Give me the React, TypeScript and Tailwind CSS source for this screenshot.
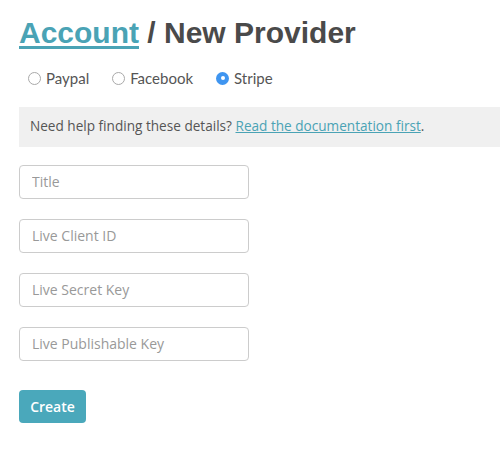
import React from "react";

const PROVIDERS = ["Paypal", "Facebook", "Stripe"];
const FIELDS = ["Title", "Live Client ID", "Live Secret Key", "Live Publishable Key"];

function Radio({ label, checked }: { label: string; checked?: boolean }) {
  return (
    <label className="flex items-center gap-[5px]">
      {checked ? (
        <span className="flex h-[13px] w-[13px] items-center justify-center rounded-full bg-[#3f95f0]">
          <span className="h-[4px] w-[4px] rounded-full bg-white" />
        </span>
      ) : (
        <span className="h-[13px] w-[13px] rounded-full border border-[#a9a9a9] bg-white" />
      )}
      <span>{label}</span>
    </label>
  );
}

export default function App() {
  return (
    <div className="h-[460px] w-[500px] overflow-hidden bg-white pl-[19px] pt-[14px] font-['Open_Sans',sans-serif] text-[14px] text-[#555]">
      <h1 className="font-['Liberation_Sans',Arial,sans-serif] text-[30px] font-bold leading-[37px] text-[#4a4a4a]">
        <a href="#" className="text-[#4aa3b5] underline decoration-[3px] underline-offset-[3px]">
          Account
        </a>{" "}
        / New Provider
      </h1>

      <div className="mt-[16px] flex gap-[23px] pl-[9px] font-['Lato',sans-serif] text-[15px] text-[#555]">
        {PROVIDERS.map((p) => (
          <Radio key={p} label={p} checked={p === "Stripe"} />
        ))}
      </div>

      <div className="mt-[17px] flex h-[40px] items-center bg-[#f0f0f0] pl-[11px] text-[13.6px]">
        Need help finding these details?&nbsp;
        <a href="#" className="text-[#4aa3b5] underline">
          Read the documentation first
        </a>
        .
      </div>

      <form className="mt-[18px] flex flex-col gap-[20px]">
        {FIELDS.map((f) => (
          <input
            key={f}
            placeholder={f}
            className="h-[34px] w-[230px] rounded-[4px] border border-[#ccc] px-[12px] text-[14px] placeholder:text-[#999]"
          />
        ))}
        <button
          type="button"
          className="mt-[9px] h-[33px] w-[67px] rounded-[4px] bg-[#4aa8bb] text-[14px] font-semibold text-white"
        >
          Create
        </button>
      </form>
    </div>
  );
}
